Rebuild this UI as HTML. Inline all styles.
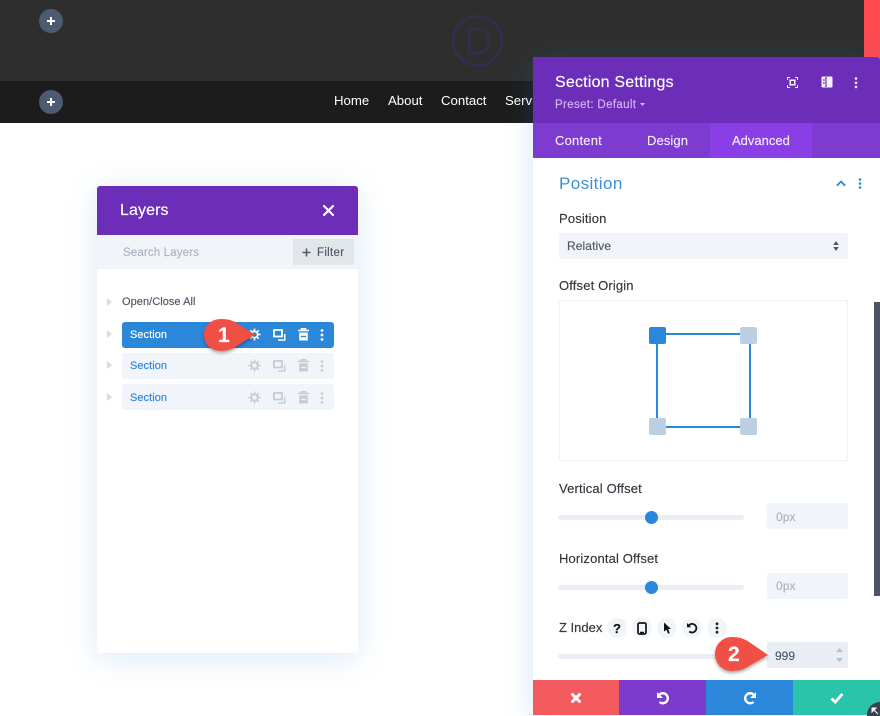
<!DOCTYPE html>
<html><head><meta charset="utf-8">
<style>
html,body{margin:0;padding:0;width:880px;height:716px;overflow:hidden}
#w{width:880px;height:716px;overflow:hidden;position:relative;background:#fff;font-family:"Liberation Sans",sans-serif}
.a{position:absolute}
.t{position:absolute;white-space:nowrap;line-height:16px;letter-spacing:.1px;-webkit-text-stroke:.15px currentColor}
.lbl{font-size:13px;color:#32373c;letter-spacing:.15px}
.plus{position:absolute;width:24px;height:24px;border-radius:50%;background:#4c5b6f}
.plus:before{content:"";position:absolute;left:8px;top:11px;width:8px;height:2px;background:#fff}
.plus:after{content:"";position:absolute;left:11px;top:8px;width:2px;height:8px;background:#fff}
.nav{color:#fff;font-size:13.2px;position:absolute;top:93px;line-height:16px;white-space:nowrap}
.row{position:absolute;left:122px;width:212px;height:26px;border-radius:3px;background:#f1f5f9}
.tri{position:absolute;left:107px;width:0;height:0;border-left:5px solid #d5dbe1;border-top:4px solid transparent;border-bottom:4px solid transparent}
.input{position:absolute;left:767px;width:81px;height:26px;background:#f1f5f9;border-radius:2px}
.track{position:absolute;left:558px;width:186px;height:5px;border-radius:3px;background:#e9eef4}
.knob{position:absolute;width:13px;height:13px;border-radius:50%;background:#2b87da}
.pill{position:absolute;top:618px;width:20px;height:20px;border-radius:50%;background:#f1f5f9}
svg{position:absolute;overflow:visible}
</style></head><body><div id="w">

<div class="a" style="left:0;top:0;width:880px;height:81px;background:#2e2e2e"></div>
<div class="a" style="left:0;top:81px;width:880px;height:42px;background:#1c1c1c"></div>
<div class="a" style="left:864px;top:0;width:16px;height:60px;background:#ff4a50"></div>
<div class="plus" style="left:39px;top:9px"></div>
<div class="plus" style="left:39px;top:90px"></div>
<svg style="left:451px;top:14px" width="52" height="54" viewBox="0 0 52 54"><circle cx="26.500" cy="27" r="24.500" fill="none" stroke="#30304a" stroke-width="3"/><path d="M18 15h8c8 0 12 5 12 12s-4 12-12 12h-8z" fill="none" stroke="#30304a" stroke-width="3"/></svg>
<div class="nav" style="left:334px">Home</div>
<div class="nav" style="left:388px">About</div>
<div class="nav" style="left:441px">Contact</div>
<div class="nav" style="left:505px">Services</div>

<!-- Layers panel -->
<div class="a" style="left:97px;top:186px;width:261px;height:467px;background:#fff;border-radius:3px;box-shadow:0 5px 30px rgba(43,135,218,.18)"></div>
<div class="a" style="left:97px;top:186px;width:261px;height:49px;background:#6c2eb9;border-radius:3px 3px 0 0"></div>
<div class="t" style="left:120px;top:202px;font-size:16px;color:#fff;line-height:18px">Layers</div>
<svg style="left:323px;top:205px" width="11" height="11" viewBox="0 0 11 11"><path d="M1 1l9 9M10 1l-9 9" stroke="#fff" stroke-width="2.200" stroke-linecap="round"/></svg>
<div class="a" style="left:97px;top:235px;width:261px;height:34px;background:#f1f5f9"></div>
<div class="t" style="left:123px;top:245px;font-size:11.500px;color:#a9b3bf;letter-spacing:.15px">Search Layers</div>
<div class="a" style="left:293px;top:239px;width:61px;height:26px;background:#e1e6eb;border-radius:2px"></div>
<svg style="left:302px;top:248px" width="9" height="9" viewBox="0 0 9 9"><path d="M4.500 .5v8M.5 4.500h8" stroke="#4c5866" stroke-width="1.500"/></svg>
<div class="t" style="left:317px;top:245px;font-size:11.500px;color:#4c5866;letter-spacing:.3px">Filter</div>

<div class="tri" style="top:298px"></div>
<div class="t" style="left:122px;top:294px;font-size:11px;color:#4c5866;letter-spacing:.05px">Open/Close All</div>

<div class="tri" style="top:330px"></div>
<div class="row" style="top:322px;background:#2b87da"></div>
<div class="t" style="left:130px;top:327px;font-size:11px;color:#fff;letter-spacing:.05px">Section</div>

<div class="tri" style="top:361px"></div>
<div class="row" style="top:353px"></div>
<div class="t" style="left:130px;top:358px;font-size:11px;color:#2b87da;letter-spacing:.05px">Section</div>

<div class="tri" style="top:393px"></div>
<div class="row" style="top:384px"></div>
<div class="t" style="left:130px;top:390px;font-size:11px;color:#2b87da;letter-spacing:.05px">Section</div>

<!-- row icons -->
<svg style="left:248px;top:328px" width="13" height="13" viewBox="0 0 13 13"><circle cx="6.500" cy="6.500" r="3.200" fill="none" stroke="#fff" stroke-width="1.800"/><path d="M6.500 .5v2M6.500 10.500v2M.5 6.500h2M10.500 6.500h2M2.300 2.300l1.400 1.400M9.300 9.300l1.400 1.400M10.700 2.300l-1.400 1.400M3.700 9.300l-1.400 1.400" stroke="#fff" stroke-width="1.500"/></svg>
<svg style="left:273px;top:329px" width="13" height="12" viewBox="0 0 13 12"><path d="M1 1h8v6.500H1z" fill="none" stroke="#fff" stroke-width="1.800"/><path d="M11.800 5v6H5" fill="none" stroke="#fff" stroke-width="1.500"/></svg>
<svg style="left:298px;top:328px" width="11" height="13" viewBox="0 0 11 13"><path d="M0 2.500h11M3.500 2V.8h4V2" fill="none" stroke="#fff" stroke-width="1.500"/><path d="M1.200 4.500h8.600V12.500H1.200z" fill="#fff"/><path d="M3 8.500h5" stroke="#2b87da" stroke-width="1.400"/></svg>
<svg style="left:320px;top:329px" width="4" height="12" viewBox="0 0 4 12"><circle cx="2" cy="1.500" r="1.400" fill="#fff"/><circle cx="2" cy="6" r="1.400" fill="#fff"/><circle cx="2" cy="10.500" r="1.400" fill="#fff"/></svg>

<svg style="left:248px;top:359px" width="13" height="13" viewBox="0 0 13 13"><circle cx="6.500" cy="6.500" r="3.200" fill="none" stroke="#c5cbd2" stroke-width="1.800"/><path d="M6.500 .5v2M6.500 10.500v2M.5 6.500h2M10.500 6.500h2M2.300 2.300l1.400 1.400M9.300 9.300l1.400 1.400M10.700 2.300l-1.400 1.400M3.700 9.300l-1.400 1.400" stroke="#c5cbd2" stroke-width="1.500"/></svg>
<svg style="left:273px;top:360px" width="13" height="12" viewBox="0 0 13 12"><path d="M1 1h8v6.500H1z" fill="none" stroke="#c5cbd2" stroke-width="1.800"/><path d="M11.800 5v6H5" fill="none" stroke="#c5cbd2" stroke-width="1.500"/></svg>
<svg style="left:298px;top:359px" width="11" height="13" viewBox="0 0 11 13"><path d="M0 2.500h11M3.500 2V.8h4V2" fill="none" stroke="#c5cbd2" stroke-width="1.500"/><path d="M1.200 4.500h8.600V12.500H1.200z" fill="#c5cbd2"/><path d="M3 8.500h5" stroke="#f1f5f9" stroke-width="1.400"/></svg>
<svg style="left:320px;top:360px" width="4" height="12" viewBox="0 0 4 12"><circle cx="2" cy="1.500" r="1.400" fill="#c5cbd2"/><circle cx="2" cy="6" r="1.400" fill="#c5cbd2"/><circle cx="2" cy="10.500" r="1.400" fill="#c5cbd2"/></svg>

<svg style="left:248px;top:391px" width="13" height="13" viewBox="0 0 13 13"><circle cx="6.500" cy="6.500" r="3.200" fill="none" stroke="#c5cbd2" stroke-width="1.800"/><path d="M6.500 .5v2M6.500 10.500v2M.5 6.500h2M10.500 6.500h2M2.300 2.300l1.400 1.400M9.300 9.300l1.400 1.400M10.700 2.300l-1.400 1.400M3.700 9.300l-1.400 1.400" stroke="#c5cbd2" stroke-width="1.500"/></svg>
<svg style="left:273px;top:392px" width="13" height="12" viewBox="0 0 13 12"><path d="M1 1h8v6.500H1z" fill="none" stroke="#c5cbd2" stroke-width="1.800"/><path d="M11.800 5v6H5" fill="none" stroke="#c5cbd2" stroke-width="1.500"/></svg>
<svg style="left:298px;top:391px" width="11" height="13" viewBox="0 0 11 13"><path d="M0 2.500h11M3.500 2V.8h4V2" fill="none" stroke="#c5cbd2" stroke-width="1.500"/><path d="M1.200 4.500h8.600V12.500H1.200z" fill="#c5cbd2"/><path d="M3 8.500h5" stroke="#f1f5f9" stroke-width="1.400"/></svg>
<svg style="left:320px;top:392px" width="4" height="12" viewBox="0 0 4 12"><circle cx="2" cy="1.500" r="1.400" fill="#c5cbd2"/><circle cx="2" cy="6" r="1.400" fill="#c5cbd2"/><circle cx="2" cy="10.500" r="1.400" fill="#c5cbd2"/></svg>

<!-- callout 1 -->
<svg style="left:200px;top:315px" width="70" height="45" viewBox="0 0 70 45"><defs><filter id="s" x="-20%" y="-20%" width="140%" height="150%"><feDropShadow dx="0" dy="2" stdDeviation="1.500" flood-color="#000" flood-opacity=".35"/></filter></defs><path d="M21 4C29 4 34 6 38 9L55 19.500 38 30C34 33 29 36 21 36 11 36 4 29 4 20S11 4 21 4z" fill="#f04f45" filter="url(#s)"/></svg>
<div class="t" style="left:218px;top:325px;font-size:21px;font-weight:700;color:#fff;line-height:22px;letter-spacing:0">1</div>

<!-- Settings panel -->
<div class="a" style="left:533px;top:57px;width:347px;height:658px;background:#fff;border-radius:3px 3px 0 0;box-shadow:0 5px 30px rgba(43,135,218,.2)"></div>
<div class="a" style="left:533px;top:57px;width:347px;height:66px;background:#6c2eb9;border-radius:3px 3px 0 0"></div>
<div class="a" style="left:533px;top:123px;width:347px;height:35px;background:#7e3bd0"></div>
<div class="a" style="left:710px;top:123px;width:102px;height:35px;background:#8a3fe6"></div>
<div class="t" style="left:555px;top:74px;font-size:16px;color:#fff;line-height:18px;letter-spacing:.2px">Section Settings</div>
<div class="t" style="left:555px;top:97px;font-size:11.500px;color:#d5b5f5;letter-spacing:.35px">Preset: Default</div>
<svg style="left:640px;top:103px" width="5" height="3" viewBox="0 0 5 3"><path d="M0 0h5L2.500 3z" fill="#d5b5f5"/></svg>
<svg style="left:787px;top:77px" width="11" height="11" viewBox="0 0 11 11"><path d="M.5 3V.5H3M8 .5h2.500V3M10.500 8v2.500H8M3 10.500H.5V8" fill="none" stroke="#f3e9ff" stroke-width="1"/><rect x="3.200" y="3.200" width="4.600" height="4.600" fill="none" stroke="#fff" stroke-width="1.400"/></svg>
<svg style="left:821px;top:76px" width="12" height="12" viewBox="0 0 12 12"><rect x=".5" y=".5" width="11" height="11" rx="1" fill="#f7f0ff"/><path d="M5 1v10" stroke="#6c2eb9" stroke-width="1.200"/><path d="M2 4h1.800M2 7h1.800" stroke="#6c2eb9" stroke-width="1.200"/></svg>
<svg style="left:854px;top:77px" width="4" height="12" viewBox="0 0 4 12"><circle cx="2" cy="1.500" r="1.300" fill="#f3e9ff"/><circle cx="2" cy="5.800" r="1.300" fill="#f3e9ff"/><circle cx="2" cy="10" r="1.300" fill="#f3e9ff"/></svg>
<div class="t" style="left:555px;top:133px;font-size:13px;color:#f3eaff;letter-spacing:.2px">Content</div>
<div class="t" style="left:647px;top:133px;font-size:13px;color:#f3eaff">Design</div>
<div class="t" style="left:732px;top:133px;font-size:13px;color:#f3eaff;letter-spacing:0">Advanced</div>

<div class="t" style="left:559px;top:174px;font-size:17px;color:#3d8fd9;line-height:20px;letter-spacing:.4px;-webkit-text-stroke:0">Position</div>
<svg style="left:836px;top:180px" width="10" height="7" viewBox="0 0 10 7"><path d="M.8 5.800L5 1.500l4.200 4.300" fill="none" stroke="#2b87da" stroke-width="1.800"/></svg>
<svg style="left:858px;top:178px" width="4" height="11" viewBox="0 0 4 11"><circle cx="2" cy="1.500" r="1.300" fill="#2b87da"/><circle cx="2" cy="5.500" r="1.300" fill="#2b87da"/><circle cx="2" cy="9.500" r="1.300" fill="#2b87da"/></svg>

<div class="t lbl" style="left:559px;top:211px">Position</div>
<div class="a" style="left:559px;top:233px;width:289px;height:26px;background:#f1f5f9;border-radius:2px"></div>
<div class="t" style="left:567px;top:238px;font-size:12px;color:#4c5866">Relative</div>
<svg style="left:833px;top:241px" width="6" height="10" viewBox="0 0 6 10"><path d="M3 0l2.800 4H.2zM3 10L.2 6h5.600z" fill="#4c5866"/></svg>

<div class="t lbl" style="left:559px;top:278px">Offset Origin</div>
<div class="a" style="left:559px;top:300px;width:287px;height:159px;border:1px solid #eef1f5;border-radius:2px"></div>
<div class="a" style="left:656px;top:333px;width:91px;height:91px;border:2px solid #2b87da"></div>
<div class="a" style="left:649px;top:327px;width:17px;height:17px;background:#2b87da;border-radius:2px"></div>
<div class="a" style="left:740px;top:327px;width:17px;height:17px;background:#bcd0e4;border-radius:2px"></div>
<div class="a" style="left:649px;top:418px;width:17px;height:17px;background:#bcd0e4;border-radius:2px"></div>
<div class="a" style="left:740px;top:418px;width:17px;height:17px;background:#bcd0e4;border-radius:2px"></div>

<div class="a" style="left:874px;top:302px;width:6px;height:294px;background:#4c5566"></div>

<div class="t lbl" style="left:559px;top:481px">Vertical Offset</div>
<div class="track" style="top:515px"></div>
<div class="knob" style="left:645px;top:511px"></div>
<div class="input" style="top:503px"></div>
<div class="t" style="left:776px;top:509px;font-size:12px;color:#a9b3bf">0px</div>

<div class="t lbl" style="left:559px;top:551px">Horizontal Offset</div>
<div class="track" style="top:585px"></div>
<div class="knob" style="left:645px;top:581px"></div>
<div class="input" style="top:573px"></div>
<div class="t" style="left:776px;top:578px;font-size:12px;color:#a9b3bf">0px</div>

<div class="t lbl" style="left:559px;top:620px;letter-spacing:0">Z Index</div>
<div class="pill" style="left:607px"></div>
<div class="pill" style="left:632px"></div>
<div class="pill" style="left:657px"></div>
<div class="pill" style="left:682px"></div>
<div class="pill" style="left:707px"></div>
<div class="t" style="left:613px;top:621px;font-size:13px;font-weight:700;color:#111;letter-spacing:0">?</div>
<svg style="left:637px;top:622px" width="10" height="13" viewBox="0 0 10 13"><rect x="1" y="1" width="8" height="11" rx="1.500" fill="none" stroke="#111" stroke-width="1.700"/><path d="M3 10.500h4" stroke="#111" stroke-width="1.500"/></svg>
<svg style="left:663px;top:622px" width="9" height="13" viewBox="0 0 9 13"><path d="M1 .5l7 6.500H5.200l1.500 4-1.700.7-1.500-4L1 9.500z" fill="#111"/></svg>
<svg style="left:686px;top:622px" width="12" height="12" viewBox="0 0 12 12"><path d="M3 3.200A4.300 4.300 0 1 1 3.300 9.500" fill="none" stroke="#111" stroke-width="1.800"/><path d="M1 1v4.200h4.200z" fill="#111"/></svg>
<svg style="left:715px;top:622px" width="4" height="12" viewBox="0 0 4 12"><circle cx="2" cy="1.800" r="1.400" fill="#222"/><circle cx="2" cy="6" r="1.400" fill="#222"/><circle cx="2" cy="10.200" r="1.400" fill="#222"/></svg>

<div class="track" style="top:654px;width:186px"></div>
<div class="input" style="top:642px;background:#e9eef4"></div>
<div class="t" style="left:775px;top:648px;font-size:12px;color:#4c5866;letter-spacing:0">999</div>
<svg style="left:836px;top:648px" width="7" height="14" viewBox="0 0 7 14"><path d="M3.500 0L7 4H0zM3.500 14L0 10h7z" fill="#b7c0ca"/></svg>

<svg style="left:710px;top:635px" width="70" height="45" viewBox="0 0 70 45"><path d="M22 2C29 2 35 4 39 7L58 20 39 31C35 34 29 36 22 36 12 36 5 28 5 19S12 2 22 2z" fill="#f04f45" filter="url(#s)"/></svg>
<div class="t" style="left:728px;top:644px;font-size:21px;font-weight:700;color:#fff;line-height:22px;letter-spacing:0">2</div>

<!-- bottom buttons -->
<div class="a" style="left:533px;top:680px;width:86px;height:35px;background:#f45b5e"></div>
<div class="a" style="left:619px;top:680px;width:87px;height:35px;background:#7d3bce"></div>
<div class="a" style="left:706px;top:680px;width:87px;height:35px;background:#2b87da"></div>
<div class="a" style="left:793px;top:680px;width:87px;height:35px;background:#29c4a9"></div>
<svg style="left:570px;top:692px" width="12" height="12" viewBox="0 0 12 12"><path d="M2.500 2.500l7 7M9.500 2.500l-7 7" stroke="#fff" stroke-width="3" stroke-linecap="round"/></svg>
<svg style="left:656px;top:691px" width="14" height="14" viewBox="0 0 14 14"><path d="M3.500 3.500A5 5 0 1 1 3.500 11" fill="none" stroke="#fff" stroke-width="2.400"/><path d="M1 1v6h6z" fill="#fff"/></svg>
<svg style="left:743px;top:691px" width="14" height="14" viewBox="0 0 14 14"><path d="M10.500 3.500A5 5 0 1 0 10.500 11" fill="none" stroke="#fff" stroke-width="2.400"/><path d="M13 1v6H7z" fill="#fff"/></svg>
<svg style="left:830px;top:692px" width="14" height="12" viewBox="0 0 14 12"><path d="M1.500 6.500l3.700 3.500 7.300-8" fill="none" stroke="#fff" stroke-width="2.800"/></svg>
<div class="a" style="left:867px;top:702px;width:26px;height:26px;border-radius:50%;background:#3a4250"></div>
<svg style="left:871px;top:707px" width="9" height="9" viewBox="0 0 9 9"><path d="M1 1h4L1 5zM2 2l5 5" fill="#fff" stroke="#fff" stroke-width="1"/></svg>

</div></body></html>
